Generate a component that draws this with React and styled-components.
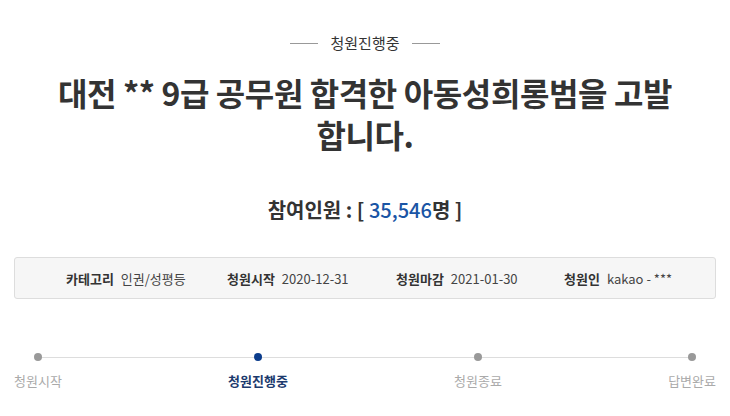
import styled, { createGlobalStyle } from "styled-components";

const Global = createGlobalStyle`
  body {
    margin: 0;
    background: #fff;
    font-family: "Noto Sans CJK KR", "Noto Sans", sans-serif;
    color: #333;
  }
`;

const Page = styled.div`
  width: 730px;
  padding: 28px 14px 0;
  box-sizing: border-box;
`;

const Status = styled.div`
  display: flex;
  align-items: center;
  justify-content: center;
  gap: 12px;
  font-size: 15px;
  color: #333;
  height: 28px;
  &::before,
  &::after {
    content: "";
    width: 28px;
    height: 1px;
    background: #999;
    margin-top: 2px;
  }
`;

const Title = styled.h1`
  margin: 15px 0 0;
  text-align: center;
  font-size: 32px;
  font-weight: 700;
  line-height: 42px;
  letter-spacing: -0.4px;
  color: #333;
`;

const Count = styled.div`
  margin-top: 42px;
  text-align: center;
  font-size: 20px;
  font-weight: 700;
  color: #333;
  line-height: 26px;
`;

const Num = styled.span`
  color: #1a55a5;
  font-weight: 500;
`;

const InfoBox = styled.div`
  margin-top: 34px;
  height: 42px;
  box-sizing: border-box;
  border: 1px solid #ddd;
  border-radius: 3px;
  background: #f6f6f6;
  display: flex;
  align-items: center;
  padding-left: 51px;
  font-size: 13px;
`;

const Item = styled.div`
  width: ${(p) => p.w}px;
  display: flex;
  gap: 7px;
`;

const Label = styled.span`
  font-weight: 700;
  color: #333;
`;

const Value = styled.span`
  color: #444;
`;

const Steps = styled.div`
  position: relative;
  margin-top: 54px;
  display: flex;
  justify-content: space-between;
  &::before {
    content: "";
    position: absolute;
    left: 22px;
    right: 22px;
    top: 4px;
    height: 1px;
    background: #ddd;
  }
`;

const Step = styled.div`
  position: relative;
  display: flex;
  flex-direction: column;
  align-items: center;
  gap: 10px;
  font-size: 13px;
  color: ${(p) => (p.active ? "#1c3a6e" : "#aaa")};
  font-weight: ${(p) => (p.active ? 700 : 400)};
`;

const Dot = styled.span`
  width: 8px;
  height: 8px;
  border-radius: 50%;
  background: ${(p) => (p.active ? "#0b3c8c" : "#999")};
`;

const steps = ["청원시작", "청원진행중", "청원종료", "답변완료"];

export default function App() {
  return (
    <>
      <Global />
      <Page>
        <Status>청원진행중</Status>
        <Title>
          대전 ** 9급 공무원 합격한 아동성희롱범을 고발
          <br />
          합니다.
        </Title>
        <Count>
          참여인원 : [ <Num>35,546</Num>명 ]
        </Count>
        <InfoBox>
          <Item w={161}>
            <Label>카테고리</Label>
            <Value>인권/성평등</Value>
          </Item>
          <Item w={169}>
            <Label>청원시작</Label>
            <Value>2020-12-31</Value>
          </Item>
          <Item w={168}>
            <Label>청원마감</Label>
            <Value>2021-01-30</Value>
          </Item>
          <Item w={140}>
            <Label>청원인</Label>
            <Value>kakao - ***</Value>
          </Item>
        </InfoBox>
        <Steps>
          {steps.map((s, i) => (
            <Step key={s} active={i === 1}>
              <Dot active={i === 1} />
              {s}
            </Step>
          ))}
        </Steps>
      </Page>
    </>
  );
}
